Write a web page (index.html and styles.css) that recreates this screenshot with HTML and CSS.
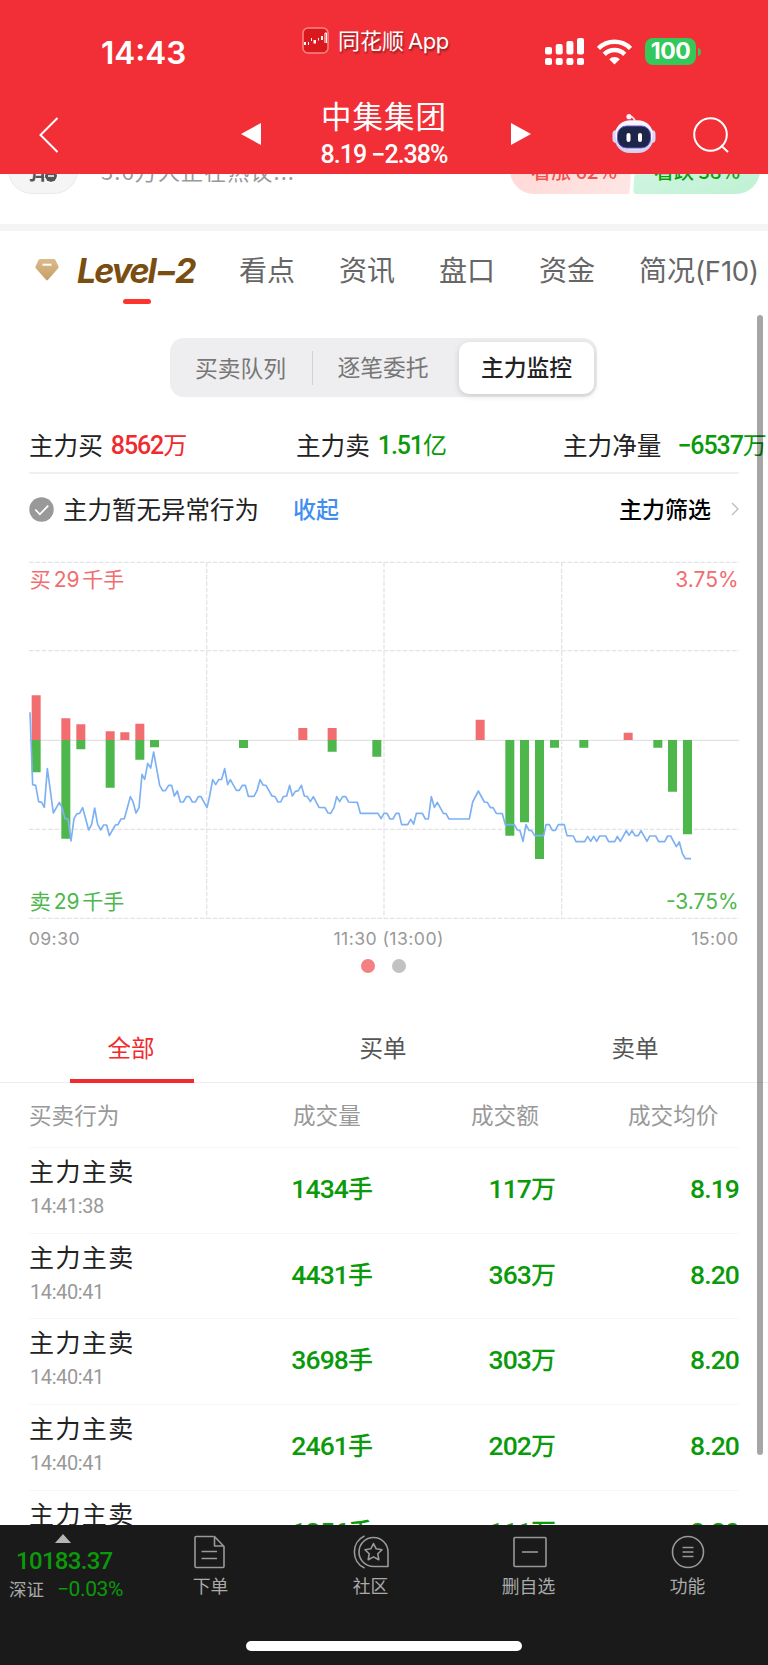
FILE: index.html
```html
<!DOCTYPE html>
<html lang="zh-CN">
<head>
    <meta charset="UTF-8">
    <meta name="viewport" content="width=device-width, initial-scale=1.0">
    <title>中集集团 - Level-2</title>
    <link rel="stylesheet" href="styles.css">
</head>
<body>
<div class="phone">
    <header class="header">
        <div class="status">
            <span class="clock">14:43</span>
            <span class="source">
                <svg class="app-logo" viewBox="0 0 27 27">
                    <rect x="1" y="1" width="25" height="25" rx="5" fill="#d9191d" stroke="#fa8585" stroke-width="1.5"/>
                    <path d="M2 15h2v3H2zM11.500 13h2.500v3.500H11.500zM19 9h2v4h-2z" fill="#fff"/>
                    <path d="M6.500 15v3M9.500 11v3M16.500 11v2.500M23 6v10M24.500 6v10M23 6h1.500" stroke="#fff" fill="none"/>
                </svg>
                <span class="source-name">同花顺<i>App</i></span>
            </span>
            <span class="indicators">
                <svg width="39" height="27" viewBox="0 0 39 27" fill="#fff">
                    <rect x="0" y="9" width="7" height="7.500" rx="2"/>
                    <rect x="10.700" y="6" width="7" height="10.500" rx="2"/>
                    <rect x="21.400" y="3" width="7" height="13.500" rx="2"/>
                    <rect x="32" y="0" width="7" height="16.500" rx="2"/>
                    <rect x="0" y="20" width="7" height="7" rx="2"/>
                    <rect x="10.700" y="20" width="7" height="7" rx="2"/>
                    <rect x="21.400" y="20" width="7" height="7" rx="2"/>
                    <rect x="32" y="20" width="7" height="7" rx="2"/>
                </svg>
                <svg class="wifi" width="35" height="26" viewBox="0 0 35 26" fill="none" stroke="#fff" stroke-width="4.600">
                    <path d="M1.500 9.500a22.500 22.500 0 0 1 32 0M7.300 15.300a14.400 14.400 0 0 1 20.400 0"/>
                    <path d="M17.500 25.500l-5.300-5.300a7.500 7.500 0 0 1 10.600 0z" fill="#fff" stroke="none"/>
                </svg>
                <span class="battery">100</span>
                <svg width="3" height="8" viewBox="0 0 3 8"><path d="M0 0q3 1 3 4t-3 4z" fill="#34c759"/></svg>
            </span>
        </div>
        <div class="nav">
            <svg class="back" viewBox="0 0 20 36"><path d="M18.500 1L1.500 18l17 17" fill="none" stroke="#fff" stroke-width="2"/></svg>
            <svg class="prev" viewBox="0 0 20 22"><path d="M20 0v22L0 11z" fill="#fff"/></svg>
            <div class="stock">
                <div class="stock-name">中集集团</div>
                <div class="stock-quote">8.19 −2.38%</div>
            </div>
            <svg class="next" viewBox="0 0 20 22"><path d="M0 0v22l20-11z" fill="#fff"/></svg>
            <svg class="robot" viewBox="0 0 44 40">
                <path d="M15 3q7-2 8 5" fill="none" stroke="#e9e9fb" stroke-width="1.600"/>
                <circle cx="17" cy="2.700" r="2.600" fill="#f4f2ff"/>
                <rect x="0.500" y="16" width="8" height="13" rx="4" fill="#d9d8f5"/>
                <rect x="35.500" y="16" width="8" height="13" rx="4" fill="#d9d8f5"/>
                <rect x="2.500" y="6.500" width="39" height="32.500" rx="15.500" fill="#d5d3f0"/>
                <rect x="3.500" y="6.500" width="37" height="29" rx="14" fill="#f6f6ff"/>
                <rect x="5.500" y="12" width="33" height="22" rx="9" fill="#1d2649" stroke="#6c4fd8"/>
                <rect x="14.500" y="19" width="4" height="9" rx="2" fill="#fff"/>
                <rect x="26" y="19" width="4" height="9" rx="2" fill="#fff"/>
            </svg>
            <svg class="search" viewBox="0 0 36 36" fill="none" stroke="#fff" stroke-width="2"><circle cx="17.500" cy="17.500" r="16.300"/><path d="M28 28.500l7 6.500"/></svg>
        </div>
    </header>

    <main class="content">
        <div class="comment-bar">
            <div class="danmu">弹<svg viewBox="0 0 12 12"><circle cx="6" cy="6" r="6" fill="#555"/><path d="M3 6h6" stroke="#fff" stroke-width="1.500"/></svg></div>
            <div class="comment-hint">3.6万人正在热议...</div>
            <div class="vote vote-up">看涨 62%</div>
            <div class="vote vote-down">看跌 38%</div>
        </div>

        <nav class="tabs">
            <div class="tab-level2">
                <svg viewBox="0 0 24 22">
                    <defs><linearGradient id="gold" x2="0" y2="1"><stop stop-color="#dbbb8b"/><stop offset="1" stop-color="#c69e68"/></linearGradient></defs>
                    <path d="M5.500 0h13q1.500 0 2 1l3 6.500q.5 1-.5 2L12.800 21q-.8.800-1.600 0L1 9.500q-1-1-.500-2L3.500 1q.5-1 2-1z" fill="url(#gold)"/>
                    <path d="M7.500 5.700h9" stroke="#fff" stroke-width="2"/>
                </svg>
                <span>Level−2</span>
            </div>
            <a class="tab">看点</a>
            <a class="tab">资讯</a>
            <a class="tab">盘口</a>
            <a class="tab">资金</a>
            <a class="tab">简况<i>(F10)</i></a>
        </nav>

        <div class="segment">
            <div class="seg-item">买卖队列</div>
            <div class="seg-item seg-second">逐笔委托</div>
            <div class="seg-item seg-active">主力监控</div>
        </div>

        <div class="summary">
            <div class="sum-item">主力买<b class="red"><i>8562</i>万</b></div>
            <div class="sum-item">主力卖<b class="green"><i>1.51</i>亿</b></div>
            <div class="sum-item sum-net">主力净量<b class="green"><i>−6537</i>万</b></div>
        </div>

        <div class="notice">
            <svg class="check" viewBox="0 0 26 26"><circle cx="13" cy="13" r="12.700" fill="#999"/><path d="M6.500 13l4.800 5 8.700-9" fill="none" stroke="#fff" stroke-width="1.800"/></svg>
            <span class="notice-text">主力暂无异常行为</span>
            <a class="collapse">收起</a>
            <a class="filter">主力筛选</a>
            <svg class="more" viewBox="0 0 8 14"><path d="M1 1l6 6-6 6" fill="none" stroke="#bbb" stroke-width="1.300"/></svg>
        </div>

        <svg class="chart" viewBox="0 -18 2304 1233">
            <!-- grid -->
            <g stroke="#e4e4e4" stroke-width="4" stroke-dasharray="14 5">
                <path d="M87 37H2217M87 302H2217M87 838H2217M87 1105H2217"/>
                <path d="M620 37V1105M1152 37V1105M1685 37V1105"/>
            </g>
            <path d="M87 571H2217" stroke="#e2e2e2" stroke-width="4"/>
            <!-- buy volume -->
            <path fill="#f16d6f" d="M95 436h27v134h-27zM184 505h27v65h-27zM229 523h27v47h-27zM317 544h27v26h-27zM361 547h27v23h-27zM406 521h27v49h-27zM895 534h27v36h-27zM983 534h27v36h-27zM1427 509h27v61h-27zM1871 548h27v22h-27z"/>
            <!-- sell volume -->
            <path fill="#4db74c" d="M95 570h27v97h-27zM184 570h27v296h-27zM229 570h27v28h-27zM317 570h27v143h-27zM406 570h27v59h-27zM450 570h27v22h-27zM717 570h27v24h-27zM983 570h27v35h-27zM1117 570h27v50h-27zM1516 570h27v287h-27zM1560 570h27v247h-27zM1605 570h27v357h-27zM1650 570h27v23h-27zM1738 570h27v23h-27zM1960 570h27v23h-27zM2004 570h27v155h-27zM2049 570h27v283h-27z"/>
            <!-- price line -->
            <polyline fill="none" stroke="#7db1f3" stroke-width="5" stroke-linejoin="round" points="90,487 98,704 107,706 116,755 125,757 133,772 142,656 151,722 160,789 178,757 186,772 195,806 204,807 213,873 222,806 231,791 239,790 248,773 266,840 275,823 284,774 293,823 302,840 311,825 320,825 328,857 346,825 354,824 363,807 373,806 391,740 399,755 408,789 417,773 426,673 434,688 443,640 452,654 461,606 479,706 488,722 496,722 506,706 515,706 523,738 532,723 541,756 550,756 559,740 568,740 577,756 586,756 595,740 603,740 621,773 629,738 638,689 647,704 656,689 665,688 674,656 683,704 691,689 709,721 718,721 727,706 736,706 745,739 762,739 771,722 780,689 789,705 798,706 816,738 825,740 834,756 842,756 850,740 860,738 869,706 877,738 886,724 895,722 904,706 913,738 922,740 931,755 940,740 957,772 975,773 984,789 992,790 1002,773 1010,740 1019,755 1028,740 1037,740 1046,756 1072,757 1081,790 1134,790 1143,806 1152,790 1161,790 1170,807 1179,807 1188,790 1197,790 1205,824 1223,824 1232,808 1241,822 1249,790 1267,790 1276,807 1285,807 1294,740 1303,772 1312,757 1330,790 1338,791 1347,807 1408,807 1418,756 1435,723 1453,756 1462,757 1471,773 1479,773 1489,790 1507,791 1516,824 1543,824 1552,840 1560,842 1569,874 1578,824 1587,841 1595,842 1604,857 1631,857 1638,824 1648,824 1657,841 1666,841 1675,824 1693,824 1701,857 1720,858 1728,875 1754,875 1763,859 1772,874 1781,859 1790,874 1799,858 1817,858 1826,875 1844,875 1852,859 1861,874 1879,842 1887,856 1896,842 1905,857 1915,857 1923,842 1941,874 1949,858 1967,858 1976,875 1994,875 2003,858 2012,858 2029,890 2038,876 2047,910 2056,926 2073,926"/>
            <g class="scale">
                <text class="up" x="89" y="112">买<tspan x="161">29</tspan><tspan x="247">千手</tspan></text>
                <text class="up end" x="2216" y="112">3.75%</text>
                <text class="down" x="89" y="1077">卖<tspan x="161">29</tspan><tspan x="247">千手</tspan></text>
                <text class="down end" x="2216" y="1077">-3.75%</text>
            </g>
            <g class="hours">
                <text x="86" y="1185">09:30</text>
                <text class="mid" x="1166" y="1185">11:30 (13:00)</text>
                <text class="end" x="2216" y="1185">15:00</text>
            </g>
        </svg>

        <div class="dots"><span class="dot dot-on"></span><span class="dot"></span></div>

        <div class="order-tabs">
            <div class="order-tab order-active">全部</div>
            <div class="order-tab">买单</div>
            <div class="order-tab">卖单</div>
        </div>

        <div class="orders">
            <div class="order-head">
                <span>买卖行为</span><span class="c2">成交量</span><span class="c3">成交额</span><span class="c4">成交均价</span>
            </div>
            <div class="order">
                <div class="who">主力主卖<small>14:41:38</small></div>
                <div class="num"><i>1434</i>手</div><div class="num"><i>117</i>万</div><div class="num"><i>8.19</i></div>
            </div>
            <div class="order">
                <div class="who">主力主卖<small>14:40:41</small></div>
                <div class="num"><i>4431</i>手</div><div class="num"><i>363</i>万</div><div class="num"><i>8.20</i></div>
            </div>
            <div class="order">
                <div class="who">主力主卖<small>14:40:41</small></div>
                <div class="num"><i>3698</i>手</div><div class="num"><i>303</i>万</div><div class="num"><i>8.20</i></div>
            </div>
            <div class="order">
                <div class="who">主力主卖<small>14:40:41</small></div>
                <div class="num"><i>2461</i>手</div><div class="num"><i>202</i>万</div><div class="num"><i>8.20</i></div>
            </div>
            <div class="order">
                <div class="who">主力主卖<small>14:40:41</small></div>
                <div class="num"><i>1356</i>手</div><div class="num"><i>111</i>万</div><div class="num"><i>8.20</i></div>
            </div>
        </div>
    </main>

    <footer class="toolbar">
        <div class="index">
            <svg width="16" height="9" viewBox="0 0 16 9"><path d="M8 0l8 9H0z" fill="#b5b5b5"/></svg>
            <div class="index-value">10183.37</div>
            <div class="index-row">深证<span>−0.03%</span></div>
        </div>
        <div class="tool">
            <svg viewBox="0 0 36 34"><path d="M20.500 1.500H3q-1 0-1 1v29q0 1 1 1h27q1 0 1-1V11.500L21.500 1.500v9.500h9M8.500 16.500H24M8.500 23.500H24"/></svg>
            下单
        </div>
        <div class="tool tool-club">
            <svg viewBox="0 0 36 34"><path d="M11.500 1C-2 7-2 27 11.500 33M35 31.500V17A14.500 14.500 0 1 0 20.500 31.500zM20.500 8.500l2.700 5.300 5.800.9-4.200 4.100 1 5.900-5.300-2.800-5.300 2.800 1-5.900-4.200-4.100 5.800-.900z"/></svg>
            社区
        </div>
        <div class="tool">
            <svg viewBox="0 0 36 34"><rect x="3" y="2.500" width="32" height="29" rx="1"/><path d="M11 17h16"/></svg>
            删自选
        </div>
        <div class="tool">
            <svg viewBox="0 0 36 34"><circle cx="18" cy="17" r="15.500"/><path d="M12.500 12.500h11M12.500 17h11M12.500 21.500h11"/></svg>
            功能
        </div>
        <div class="home-bar"></div>
    </footer>
    <div class="scrollbar"></div>
</div>
</body>
</html>
```

FILE: styles.css
```css
* {
    box-sizing: border-box;
}

body {
    margin: 0;
    font-family: "Noto Sans CJK SC", sans-serif;
    background: #fff;
    color: #222;
}

i {
    font-style: normal;
}

svg {
    display: block;
    flex: none;
}

.phone {
    position: relative;
    display: flex;
    flex-direction: column;
    width: 768px;
    height: 1665px;
    overflow: hidden;
}

/* header */
.header {
    flex: none;
    height: 174px;
    background: #f22f37;
    color: #fff;
}

.status {
    display: flex;
    height: 96px;
    padding: 26px 67px 0 101px;
}

.clock {
    width: 201px;
    font: 600 31.5px/54px Inter, sans-serif;
    letter-spacing: 0;
}

.source {
    display: flex;
    height: 29px;
    align-items: center;
}

.app-logo {
    width: 27px;
    height: 27px;
    margin-right: 9px;
}

.source-name {
    font-size: 22px;
    line-height: 29px;
    text-shadow: 1px 2px 2px rgba(0, 0, 0, 0.4);
    white-space: nowrap;
}

.source-name i {
    margin-left: 4px;
    font-family: Inter, sans-serif;
    letter-spacing: -0.5px;
}

.indicators {
    display: flex;
    align-items: center;
    height: 27px;
    margin: 12px 0 0 auto;
}

.wifi {
    margin: 0 13px;
}

.battery {
    width: 51px;
    height: 27px;
    margin-right: 2px;
    border-radius: 8px;
    background: #34c759;
    font: 700 23px/27px Inter, sans-serif;
    letter-spacing: -0.5px;
    text-align: center;
}

.nav {
    display: flex;
    height: 78px;
    padding: 0 39px 0 39px;
}

.back {
    width: 20px;
    height: 36px;
    margin-top: 21px;
}

.prev,
.next {
    width: 20px;
    height: 22px;
    margin-top: 27px;
}

.prev {
    margin-left: 182px;
}

.stock {
    width: 250px;
    padding-right: 4px;
    text-align: center;
    white-space: nowrap;
}

.stock-name {
    font-size: 30.5px;
    line-height: 38px;
    letter-spacing: 1px;
}

.stock-quote {
    margin-top: 5px;
    font: 500 25px/32px Roboto, sans-serif;
    letter-spacing: -1px;
}

.robot {
    width: 44px;
    height: 40px;
    margin: 18px 0 0 81px;
}

.search {
    width: 36px;
    height: 36px;
    margin: 21px 0 0 auto;
}

/* scrolled content */
.content {
    flex: 1;
    min-height: 0;
    overflow: hidden;
}

.comment-bar {
    display: flex;
    height: 57px;
    padding: 0 8px;
    border-bottom: 7px solid #f4f4f4;
    line-height: 48px;
    font-size: 20px;
}

.comment-bar > * {
    height: 48px;
    margin-top: -28px;
}

.danmu {
    display: flex;
    width: 70px;
    padding-left: 19px;
    border: 1px solid #eaeaea;
    border-radius: 24px;
    background: #f5f5f5;
    font-size: 22px;
    font-weight: 700;
    color: #555;
    line-height: 45px;
}

.danmu svg {
    width: 14px;
    height: 14px;
    margin: 22px 0 0 -6px;
    border: 1px solid #fff;
    border-radius: 50%;
}

.comment-hint {
    width: 432px;
    padding-left: 23px;
    color: #999;
    font-size: 22px;
    letter-spacing: 1.1px;
    line-height: 48px;
}

.vote {
    width: 123px;
    font-weight: 500;
    line-height: 49px;
    padding-left: 21px;
}

.vote-up {
    background: linear-gradient(100deg, #ffd9d7, #fee6e4);
    color: #f5504b;
    border-radius: 24px 4px 4px 24px;
    clip-path: polygon(0 0, 100% 0, 97% 100%, 0 100%);
}

.vote-down {
    flex: 1;
    background: linear-gradient(160deg, #d7f7e6, #bef1d3);
    color: #0a9d0a;
    border-radius: 4px 24px 24px 4px;
    clip-path: polygon(3% 0, 100% 0, 100% 100%, 0 100%);
}

.tabs {
    display: flex;
    height: 78px;
    padding-left: 35px;
    line-height: 77px;
    white-space: nowrap;
}

.tab-level2 {
    position: relative;
    display: flex;
    width: 204px;
}

.tab-level2 svg {
    width: 24px;
    height: 22px;
    margin-top: 28px;
}

.tab-level2 span {
    margin-left: 18px;
    font: italic 700 34px/80px Inter, sans-serif;
    letter-spacing: -2px;
    color: #7a4d10;
}

.tab-level2::after {
    content: "";
    position: absolute;
    left: 88px;
    top: 68px;
    width: 28px;
    height: 5px;
    border-radius: 2.5px;
    background: #fd352f;
}

.tab {
    width: 100px;
    font-size: 28px;
    color: #666;
}

.tab i {
    font: 27.5px Inter, sans-serif;
    letter-spacing: -0.2px;
}

.segment {
    display: flex;
    align-items: center;
    width: 427px;
    height: 59px;
    margin: 29px 0 0 170px;
    padding: 3px;
    border-radius: 14px;
    background: #eeeef0;
    font-size: 22.8px;
    color: #777;
}

.seg-item {
    width: 139px;
    padding-right: 4px;
    text-align: center;
    line-height: 32px;
}

.seg-second {
    width: 147px;
    border-left: 1px solid #d2d2d4;
    padding: 0 6px 2px 0;
}

.seg-active {
    width: 135px;
    height: 52px;
    padding: 0;
    border-radius: 10px;
    background: #fff;
    box-shadow: 0 2px 6px rgba(0, 0, 0, 0.15);
    color: #222;
    font-weight: 500;
    line-height: 49px;
}

.summary {
    display: flex;
    height: 77px;
    margin: 0 29px;
    border-bottom: 2px solid #f0f0f0;
    padding-top: 21px;
    line-height: 52px;
    font-size: 24.6px;
    white-space: nowrap;
}

.sum-item {
    width: 267px;
}

.sum-net {
    width: 176px;
}

.summary b {
    display: inline-block;
    margin-left: 8px;
    font-weight: 400;
    font-size: 24px;
    position: relative;
    top: -1px;
}

.sum-net b {
    margin-left: 16px;
}

.summary i {
    font-family: Roboto, sans-serif;
    font-size: 25px;
    font-weight: 500;
    letter-spacing: -1.1px;
}

.red {
    color: #f02a2e;
}

.green {
    color: #0a9a0a;
}

.notice {
    display: flex;
    align-items: center;
    height: 70px;
    padding: 0 29px;
    font-size: 24.5px;
}

.notice span,
.notice a {
    padding-bottom: 2px;
}

.check {
    width: 25px;
    height: 25px;
    margin-right: 9px;
}

.collapse {
    margin-left: 34px;
    font-size: 23px;
    color: #3f8ef0;
    font-weight: 500;
}

.filter {
    margin: 0 20px 0 auto;
    font-size: 23px;
    font-weight: 500;
    color: #000;
}

.more {
    width: 8px;
    height: 14px;
}

/* chart */
.chart {
    width: 768px;
    height: 411px;
}

.scale text {
    font-family: Inter, "Noto Sans CJK SC", sans-serif;
    font-size: 63px;
}

.hours text {
    font-family: Inter, sans-serif;
    font-size: 53px;
    letter-spacing: 1.3px;
    fill: #999;
}

.up {
    fill: #f16d6f;
}

.down {
    fill: #4db74c;
}

.end {
    text-anchor: end;
}

.mid {
    text-anchor: middle;
}

.dots {
    display: flex;
    justify-content: center;
    align-items: center;
    gap: 17px;
    height: 22px;
    padding-right: 2px;
}

.dot {
    width: 14px;
    height: 14px;
    border-radius: 50%;
    background: #c2c2c2;
}

.dot-on {
    background: #f38082;
}

/* orders */
.order-tabs {
    display: flex;
    height: 70px;
    margin-top: 36px;
    padding: 0 6px;
    border-bottom: 1px solid #ededed;
}

.order-tab {
    position: relative;
    width: 252px;
    padding-right: 2px;
    text-align: center;
    font-size: 23.5px;
    line-height: 68px;
    color: #555;
}

.order-active {
    color: #f02a2e;
}

.order-active::after {
    content: "";
    position: absolute;
    left: 64px;
    bottom: -1px;
    width: 124px;
    height: 4px;
    background: #f02a2e;
}

.orders {
    padding: 0 29px;
}

.order-head,
.order {
    display: grid;
    grid-template-columns: 193px 151px 183px 183px;
    border-bottom: 1.5px solid #f7f7f7;
}

.order-head {
    height: 65px;
    line-height: 64px;
    font-size: 22.6px;
    color: #999;
}

.c2 {
    padding-left: 71px;
}

.c3 {
    padding-left: 98px;
}

.c4 {
    padding-left: 72px;
}

.order {
    height: 85.7px;
}

.who {
    padding-top: 4px;
    font-size: 25px;
    letter-spacing: 1.4px;
    line-height: 37px;
}

.who small {
    display: block;
    padding: 3px 0 0 1px;
    font: 20px/29px Roboto, sans-serif;
    letter-spacing: -0.4px;
    color: #999;
}

.num {
    text-align: right;
    font-size: 25px;
    font-weight: 500;
    line-height: 79px;
    color: #0a9a0a;
    white-space: nowrap;
}

.num i {
    font-family: Roboto, sans-serif;
    font-size: 26.5px;
    letter-spacing: -0.9px;
}

/* bottom toolbar */
.toolbar {
    position: relative;
    display: flex;
    flex: none;
    height: 140px;
    background: #1a1a1a;
    color: #aaa;
}

.index {
    width: 131px;
    padding-top: 9px;
}

.index svg {
    margin-left: 55px;
}

.index-value {
    padding: 3px 0 0 16px;
    font: 500 24px/31px Roboto, sans-serif;
    letter-spacing: -0.7px;
    color: #0a9a0a;
}

.index-row {
    padding-left: 9px;
    font-size: 17.5px;
    line-height: 24px;
}

.index-row span {
    margin-left: 13px;
    font: 21px/20px Roboto, sans-serif;
    letter-spacing: -0.4px;
    color: #0a9a0a;
}

.tool {
    width: 159px;
    padding-top: 10px;
    text-align: center;
    font-size: 17.8px;
    line-height: 32px;
}

.tool-club {
    padding-left: 2px;
}

.tool svg {
    width: 36px;
    height: 34px;
    margin: 0 auto;
    fill: none;
    stroke: #999;
    stroke-width: 1.6;
    stroke-linejoin: round;
}

.home-bar {
    position: absolute;
    left: 246px;
    bottom: 14px;
    width: 276px;
    height: 10px;
    border-radius: 5px;
    background: #fff;
}

.scrollbar {
    position: absolute;
    left: 757px;
    top: 315px;
    width: 6px;
    height: 1140px;
    border-radius: 3px;
    background: rgba(0, 0, 0, 0.35);
}
```
